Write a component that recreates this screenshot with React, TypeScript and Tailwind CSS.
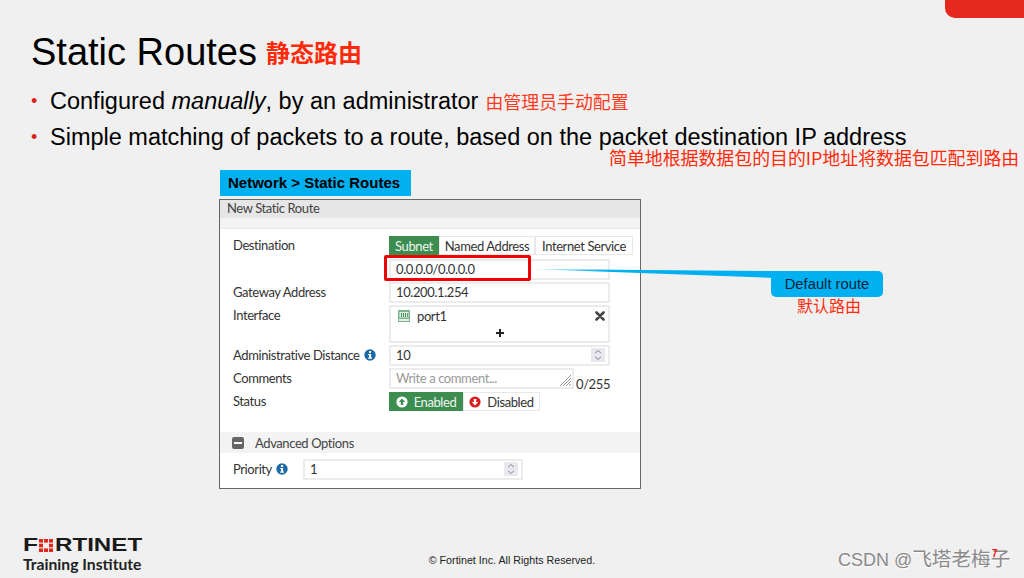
import React from "react";

const CJK = "font-['Noto_Sans_CJK_SC',sans-serif]";

function Info() {
  return (
    <svg width="12" height="12" viewBox="0 0 12 12" className="shrink-0">
      <circle cx="6" cy="6" r="5.7" fill="#1c6aa8" />
      <rect x="5" y="2" width="2.1" height="2" fill="#fff" />
      <path d="M4.2 5h2.9v3.6h.9v1.1H4.2V8.6h.9V6.1h-.9z" fill="#fff" />
    </svg>
  );
}

function Spinner() {
  return (
    <div className="w-[14px] h-[14px] bg-[#e8e8ee] flex items-center justify-center">
      <svg width="8" height="12" viewBox="0 0 8 12" fill="none" stroke="#888" strokeWidth="1">
        <path d="M1 4.2 4 1.5l3 2.7M1 7.8l3 2.7 3-2.7" />
      </svg>
    </div>
  );
}

function Label({ children }: { children?: React.ReactNode }) {
  return <div className="w-[169px] pl-[13px] shrink-0 text-[#333] flex items-center gap-[4px] whitespace-nowrap pb-[1px]">{children}</div>;
}

function Field({ children, className = "" }: { children?: React.ReactNode; className?: string }) {
  return (
    <div className={`w-[221px] h-[21px] border-2 border-[#ececec] bg-white flex items-center justify-between pl-[5px] pr-[3px] pb-[1px] text-[#333] ${className}`}>
      {children}
    </div>
  );
}

export default function App() {
  return (
    <div className="relative w-[1024px] h-[578px] overflow-hidden bg-[#f0f0f0] font-['Liberation_Sans',sans-serif] text-black flex flex-col">
      <div className="absolute right-0 top-0 w-[79px] h-[18px] bg-[#e5281e] rounded-bl-[10px]" />

      <div className="pl-[31px] pt-[29px] h-[80px] flex items-center gap-[9px] pb-[6px]">
        <span className="text-[38px] leading-[44px] whitespace-nowrap">Static Routes</span>
        <span className={`${CJK} text-[24px] leading-[30px] font-bold text-[#ff2a0a]`}>静态路由</span>
      </div>

      <div className="pl-[31px] text-[23.5px] leading-[36px] h-[36px] flex items-center mt-[3px]">
        <span className="text-[#d8261c] w-[19px] text-[18px]">•</span>
        <span>Configured <i>manually</i>, by an administrator</span>
        <span className={`${CJK} ml-[7px] text-[17.9px] text-[#ff3a1c]`}>由管理员手动配置</span>
      </div>
      <div className="pl-[31px] text-[23.5px] leading-[36px] h-[36px] flex items-center">
        <span className="text-[#d8261c] w-[19px] text-[18px]">•</span>
        <span className="whitespace-nowrap">Simple matching of packets to a route, based on the packet destination IP address</span>
      </div>
      <div className={`${CJK} h-[13px] -mt-[4px] pl-[609px] text-[17.9px] leading-[13px] text-[#ff2a0a] whitespace-nowrap`}>简单地根据数据包的目的IP地址将数据包匹配到路由</div>

      <div className="ml-[220px] mt-[6px] w-[191px] h-[26px] bg-[#00b0f0] pl-[8px] flex items-center font-bold text-[15px] text-black">
        Network &gt; Static Routes
      </div>

      <div className="ml-[219px] mt-[3px] w-[422px] h-[290px] border border-[#666] bg-white font-['Lato',sans-serif] text-[13px] tracking-[-0.4px] leading-[16px] flex flex-col">
        <div className="h-[18px] bg-[#e6e6e6] pl-[7px] pb-[3px] text-[#444] flex items-center">New Static Route</div>
        <div className="h-[11px] bg-[#f3f3f3] border-b border-[#e6e6e6]" />

        <div className="flex flex-col mt-[7px]">
          <div className="flex h-[19px]">
            <Label>Destination</Label>
            <div className="flex">
              <div className="w-[50px] bg-[#3d8c50] text-[#eef5ef] flex items-center justify-center">Subnet</div>
              <div className="w-[96px] border border-[#e8e8e8] text-[#333] flex items-center justify-center">Named Address</div>
              <div className="w-[98px] border border-[#e8e8e8] text-[#333] flex items-center justify-center">Internet Service</div>
            </div>
          </div>
          <div className="flex mt-[4px]">
            <Label />
            <Field>0.0.0.0/0.0.0.0</Field>
          </div>
          <div className="flex mt-[2px]">
            <Label>Gateway Address</Label>
            <Field>10.200.1.254</Field>
          </div>
          <div className="flex mt-[2px]">
            <div className="w-[169px] pl-[13px] shrink-0 text-[#333] pt-[2px]">Interface</div>
            <div className="w-[221px] h-[38px] border-2 border-[#ececec] flex flex-col text-[#333]">
              <div className="flex items-center justify-between h-[17px] pl-[7px] pr-[3px]">
                <span className="flex items-center gap-[7px]">
                  <svg width="12" height="12" viewBox="0 0 12 12">
                    <rect width="12" height="12" fill="#7db58c" />
                    <rect x="1.5" y="2" width="9" height="5.5" fill="#e4f0e7" />
                    <path d="M3 3h1v4H3zM5 3h1v4H5zM7 3h1v4H7zM9 3h.8v4H9z" fill="#3d8c50" />
                    <rect x="1" y="9" width="10" height="2" fill="#e4f0e7" />
                  </svg>
                  port1
                </span>
                <svg width="10" height="10" viewBox="0 0 10 10" stroke="#444" strokeWidth="2.6" strokeLinecap="round">
                  <path d="M1.5 1.5l7 7M8.5 1.5l-7 7" />
                </svg>
              </div>
              <div className="flex justify-center pt-[5px]">
                <svg width="8" height="8" viewBox="0 0 8 8" fill="#222"><path d="M3 0h2v3h3v2H5v3H3V5H0V3h3z" /></svg>
              </div>
            </div>
          </div>
          <div className="flex mt-[2px]">
            <Label>Administrative Distance <Info /></Label>
            <Field>10<Spinner /></Field>
          </div>
          <div className="flex mt-[2px]">
            <Label>Comments</Label>
            <div className="relative w-[185px] h-[21px] border-2 border-[#ececec] pl-[5px] pb-[1px] flex items-center text-[#999]">
              Write a comment...
              <svg width="13" height="13" viewBox="0 0 13 13" stroke="#777" strokeWidth="0.8" className="absolute right-0 bottom-0">
                <path d="M1 12 12 1M4 12l8-8M7 12l5-5M10 12l2-2" />
              </svg>
            </div>
            <span className="ml-[2px] self-end text-[#333] -mb-[3px]">0/255</span>
          </div>
          <div className="flex mt-[3px]">
            <Label>Status</Label>
            <div className="flex h-[19px]">
              <div className="w-[74px] bg-[#3d8c50] text-[#eef5ef] flex items-center justify-center gap-[6px]">
                <svg width="12" height="12" viewBox="0 0 12 12">
                  <circle cx="6" cy="6" r="5.6" fill="#fff" />
                  <path d="M6 2.4 9.2 6H7.2v3H4.8V6H2.8z" fill="#3d8c50" />
                </svg>
                Enabled
              </div>
              <div className="w-[77px] border border-[#e8e8e8] text-[#333] flex items-center justify-center gap-[6px]">
                <svg width="12" height="12" viewBox="0 0 12 12">
                  <circle cx="6" cy="6" r="5.6" fill="#d92020" />
                  <path d="M6 9.6 2.8 6h2V3h2.4v3h2z" fill="#fff" />
                </svg>
                Disabled
              </div>
            </div>
          </div>
        </div>

        <div className="mt-[21px] h-[21px] bg-[#f3f3f3] flex items-center pl-[12px] gap-[11px] text-[#444]">
          <div className="w-[12px] h-[12px] rounded-[2px] bg-[#666] flex items-center justify-center">
            <div className="w-[8px] h-[2px] bg-white" />
          </div>
          Advanced Options
        </div>

        <div className="flex mt-[6px]">
          <div className="w-[83px] pl-[13px] shrink-0 text-[#333] flex items-center gap-[4px] pb-[1px]">Priority <Info /></div>
          <Field className="!w-[220px]">1<Spinner /></Field>
        </div>
      </div>

      <div className="flex-1 relative">
        <div className="absolute left-[23px] top-[49px] w-[120px]">
          <div className="flex items-center h-[14px] text-[#1a1a1a] font-bold text-[19px] leading-[14px]">
            <span className="scale-x-[1.3] origin-left w-[16px]">F</span>
            <svg width="14" height="13" viewBox="0 0 14 13" fill="#e1261c" className="mr-[2px] shrink-0">
              <rect x="0" y="0" width="4" height="3.6" /><rect x="5" y="0" width="4" height="3.6" /><rect x="10" y="0" width="4" height="3.6" />
              <rect x="0" y="4.7" width="4" height="3.6" /><rect x="10" y="4.7" width="4" height="3.6" />
              <rect x="0" y="9.4" width="4" height="3.6" /><rect x="5" y="9.4" width="4" height="3.6" /><rect x="10" y="9.4" width="4" height="3.6" />
            </svg>
            <span className="scale-x-[1.27] origin-left whitespace-nowrap">RTINET</span>
          </div>
          <div className="mt-[3px] font-bold text-[15.7px] leading-[18px] text-[#222] whitespace-nowrap font-['Lato',sans-serif]">Training Institute</div>
        </div>
        <div className="absolute left-0 right-0 top-[64px] text-center text-[10.7px] leading-[14px] text-[#222]">© Fortinet Inc. All Rights Reserved.</div>
      </div>

      <div className="absolute left-[384px] top-[255px] w-[147px] h-[26px] border-[3px] border-[#f00000] rounded-[2px]" />
      <svg width="245" height="20" viewBox="0 0 245 20" className="absolute left-[530px] top-[266px]">
        <defs>
          <linearGradient id="ln" x1="0" x2="1" y1="0" y2="0">
            <stop offset="0" stopColor="#00b0f0" stopOpacity="0.2" />
            <stop offset="0.3" stopColor="#00b0f0" />
          </linearGradient>
        </defs>
        <polygon points="0,3 245,5 245,12" fill="url(#ln)" />
      </svg>
      <div className="absolute left-[771px] top-[271px] w-[112px] h-[26px] rounded-[5px] bg-[#00b0f0] flex items-center justify-center text-[14.8px] text-[#06243a]">Default route</div>
      <div className={`${CJK} absolute left-[797px] top-[295px] text-[16px] leading-[20px] text-[#ff2a0a]`}>默认路由</div>

      <div className="absolute left-[838px] top-[547px] text-[18px] leading-[24px] text-[#8a8a8a] whitespace-nowrap [text-shadow:0_1px_0_#fff] font-['Liberation_Sans','Noto_Sans_CJK_SC',sans-serif]">CSDN @<span className="text-[19.6px]">飞塔老梅子</span></div>
      <div className="absolute left-[992px] top-[548px] text-[10px] leading-[12px] font-bold text-[#f01010]">7</div>
    </div>
  );
}
